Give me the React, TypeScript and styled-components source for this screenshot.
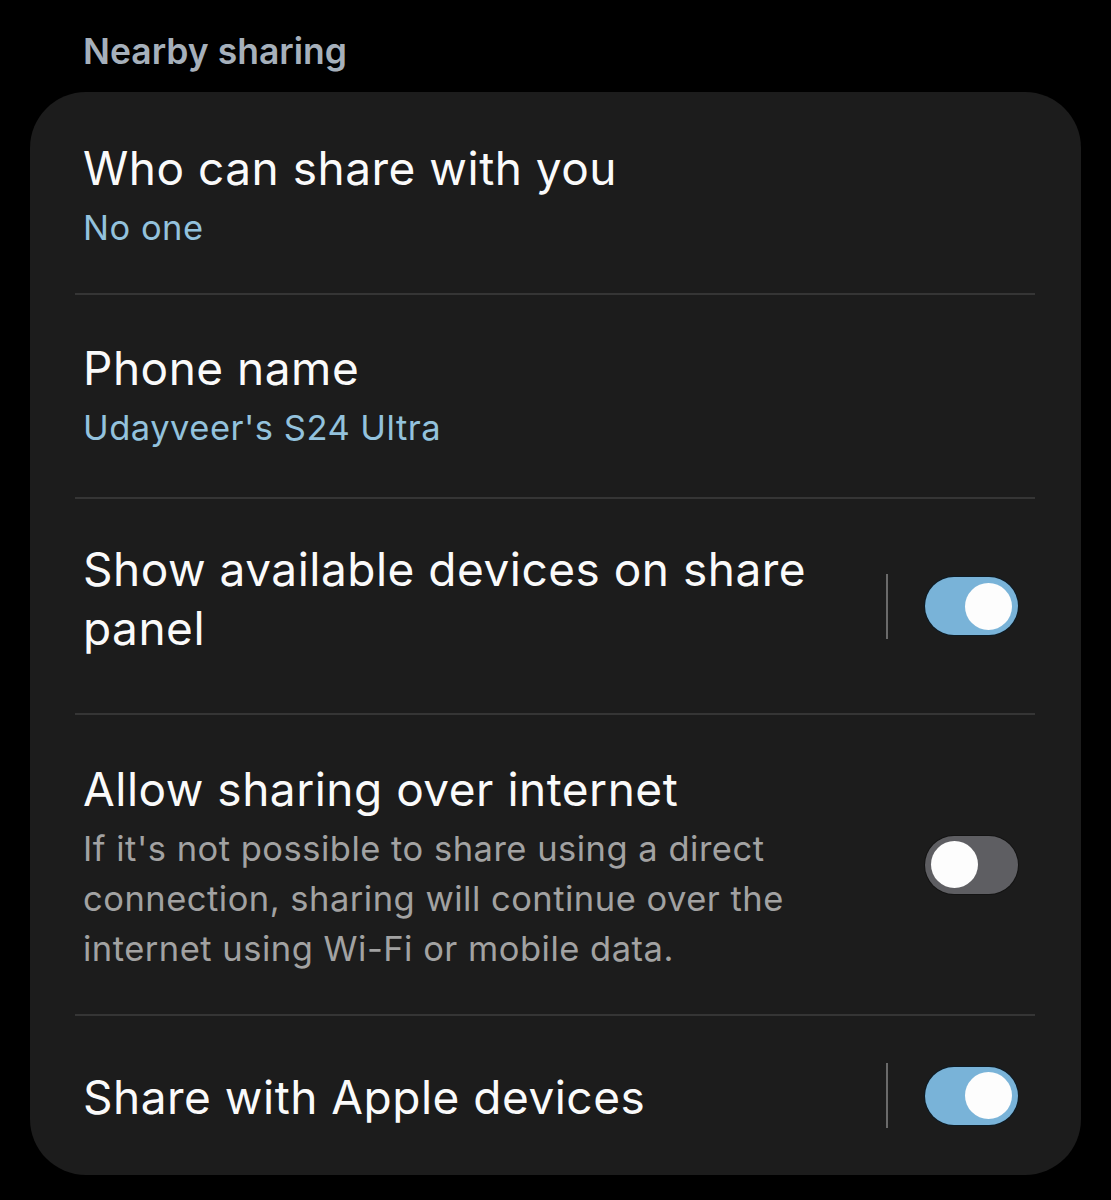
import React from 'react';
import styled, { createGlobalStyle } from 'styled-components';

const GlobalStyle = createGlobalStyle`
  html, body {
    margin: 0;
    padding: 0;
    background: #000;
  }
  body {
    font-family: Inter, Roboto, 'Noto Sans', Arial, sans-serif;
    -webkit-font-smoothing: antialiased;
  }
`;

const Page = styled.div`
  width: 1111px;
  height: 1200px;
  background: #000;
  padding: 30px 30px 0 30px;
  box-sizing: border-box;
`;

const SectionHeader = styled.div`
  color: #a6b0bb;
  font-size: 35.5px;
  font-weight: 600;
  line-height: 44px;
  padding-left: 53px;
  margin-bottom: 18px;
`;

const Card = styled.div`
  background: #1c1c1c;
  border-radius: 56px;
  padding: 0 63px 0 53px;
`;

const Row = styled.div`
  display: flex;
  align-items: center;
`;

const Divider = styled.div`
  height: 2px;
  background: #353535;
  margin: 0 -17px 0 -8px;
`;

const TextCol = styled.div<{ pt: number; pb: number }>`
  flex: 1;
  min-width: 0;
  display: flex;
  flex-direction: column;
  gap: 5px;
  padding: ${({ pt }) => pt}px 0 ${({ pb }) => pb}px;
`;

const Title = styled.div`
  color: #fafafa;
  font-size: 46px;
  letter-spacing: 0.5px;
  line-height: 59px;
  font-weight: 400;
`;

const Value = styled.div`
  color: #93c2dd;
  font-size: 34.5px;
  letter-spacing: 0.5px;
  line-height: 50px;
`;

const Description = styled.div`
  color: #a2a2a2;
  font-size: 34.5px;
  letter-spacing: 0.5px;
  line-height: 50px;
`;

const Controls = styled.div`
  display: flex;
  align-items: center;
  margin-left: 36px;
`;

const VSep = styled.div`
  width: 2px;
  height: 65px;
  background: #6a6a6a;
  margin-right: 37px;
`;

const Track = styled.div<{ on: boolean }>`
  width: 93px;
  height: 58px;
  border-radius: 29px;
  box-sizing: border-box;
  background: ${({ on }) => (on ? '#79b3d8' : '#5e5e62')};
  box-shadow: 0 0 0 1px ${({ on }) => (on ? '#0d1c26' : '#141414')};
  display: flex;
  align-items: center;
  justify-content: ${({ on }) => (on ? 'flex-end' : 'flex-start')};
  padding: 0 6px;
`;

const Thumb = styled.div`
  width: 47px;
  height: 47px;
  border-radius: 50%;
  background: #fdfdfd;
`;

function Toggle({ on }: { on: boolean }) {
  return (
    <Track on={on}>
      <Thumb />
    </Track>
  );
}

export default function App() {
  return (
    <Page>
      <GlobalStyle />
      <SectionHeader>Nearby sharing</SectionHeader>
      <Card>
        <Row>
          <TextCol pt={47} pb={40}>
            <Title>Who can share with you</Title>
            <Value>No one</Value>
          </TextCol>
        </Row>
        <Divider />
        <Row>
          <TextCol pt={44} pb={44}>
            <Title>Phone name</Title>
            <Value>Udayveer's S24 Ultra</Value>
          </TextCol>
        </Row>
        <Divider />
        <Row>
          <TextCol pt={41} pb={55}>
            <Title>Show available devices on share panel</Title>
          </TextCol>
          <Controls>
            <VSep />
            <Toggle on />
          </Controls>
        </Row>
        <Divider />
        <Row>
          <TextCol pt={45} pb={40}>
            <Title>Allow sharing over internet</Title>
            <Description>
              If it's not possible to share using a direct connection, sharing will continue over the
              internet using Wi-Fi or mobile data.
            </Description>
          </TextCol>
          <Controls>
            <Toggle on={false} />
          </Controls>
        </Row>
        <Divider />
        <Row>
          <TextCol pt={52} pb={48}>
            <Title>Share with Apple devices</Title>
          </TextCol>
          <Controls>
            <VSep />
            <Toggle on />
          </Controls>
        </Row>
      </Card>
    </Page>
  );
}
